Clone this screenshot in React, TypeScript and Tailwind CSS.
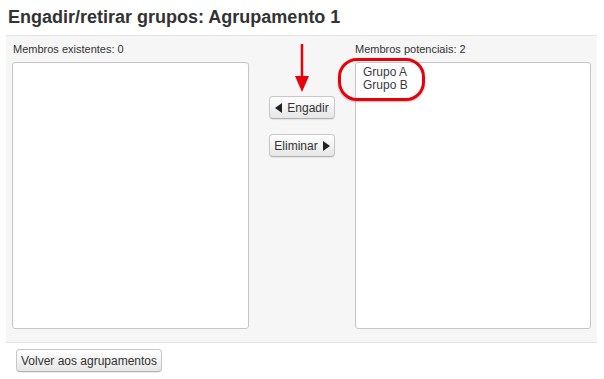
import React from 'react';

const LeftTri = () => (
  <svg width="7" height="10" viewBox="0 0 7 10" className="inline-block">
    <path d="M7 0 L0 5 L7 10 Z" fill="#222" />
  </svg>
);

const RightTri = () => (
  <svg width="7" height="10" viewBox="0 0 7 10" className="inline-block">
    <path d="M0 0 L7 5 L0 10 Z" fill="#222" />
  </svg>
);

const btn =
  'flex items-center justify-center gap-[5px] rounded-[4px] border border-[#c8c8c8] border-b-[#b3b3b3] bg-gradient-to-b from-white to-[#e6e6e6] text-[12px] text-[#333] leading-none shadow-[0_1px_1px_rgba(0,0,0,0.08)]';

export default function App() {
  return (
    <div className="w-[604px] h-[379px] bg-white font-['Liberation_Sans',Arial,sans-serif] text-[#333] relative">
      <h2 className="pl-[8px] pt-[6px] h-[35px] text-[18px] font-bold leading-[22px] text-[#333]">
        Engadir/retirar grupos: Agrupamento 1
      </h2>

      <div className="ml-[6px] w-[591px] border-t border-b border-[#e3e3e3] bg-[#f6f6f6] flex pl-[6px] pt-[6px] pb-[13px]">
        {/* existing members */}
        <div className="flex flex-col w-[237px]">
          <div className="h-[14px] text-[11px] leading-[14px] pl-[1px]">Membros existentes: 0</div>
          <div className="mt-[6px] h-[267px] rounded-[3px] border border-[#c6c6c6] bg-white" />
        </div>

        {/* actions */}
        <div className="w-[106px] flex flex-col items-center pt-[54px] gap-[15px]">
          <button className={`${btn} w-[66px] h-[23px]`}>
            <LeftTri />
            <span>Engadir</span>
          </button>
          <button className={`${btn} w-[66px] h-[23px]`}>
            <span>Eliminar</span>
            <RightTri />
          </button>
        </div>

        {/* potential members */}
        <div className="flex flex-col w-[236px]">
          <div className="h-[14px] text-[11px] leading-[14px]">Membros potenciais: 2</div>
          <div className="mt-[6px] h-[267px] rounded-[3px] border border-[#c6c6c6] bg-white pl-[7px] pt-[3px] text-[12px] leading-[13px] text-[#3a3a44]">
            <div>Grupo A</div>
            <div>Grupo B</div>
          </div>
        </div>
      </div>

      <div className="pl-[16px] pt-[6px]">
        <button className={`${btn} w-[146px] h-[23px]`}>Volver aos agrupamentos</button>
      </div>

      {/* annotations */}
      <svg className="absolute left-[294px] top-[44px]" width="16" height="49" viewBox="0 0 16 49">
        <line x1="8" y1="0" x2="8" y2="33" stroke="#e8000b" strokeWidth="2.5" />
        <path d="M1 32 L15 32 L8 48 Z" fill="#e8000b" />
      </svg>
      <div className="absolute left-[338px] top-[58px] w-[87px] h-[43px] rounded-[19px] border-[3px] border-[#e8000b] shadow-[0_1px_2px_rgba(0,0,0,0.3)]" />
    </div>
  );
}
